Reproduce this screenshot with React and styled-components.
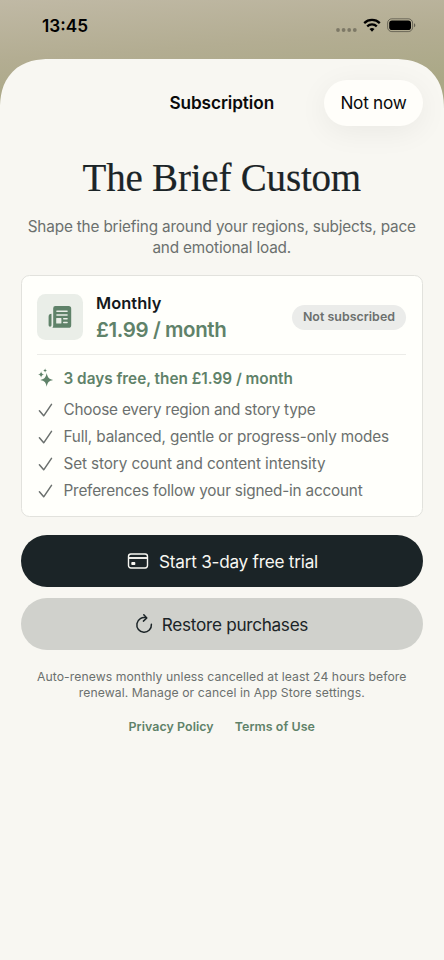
import React from "react";
import styled, { createGlobalStyle, css } from "styled-components";

// -------------------
// -- Global Styles --
// -------------------
const GlobalStyle = createGlobalStyle`
  *,
  *::before,
  *::after {
    box-sizing: border-box;
  }

  :root {
    --color-ink: #1b2427;
    --color-muted: #6b706e;
    --color-green: #5f8269;
    --color-sheet: #f8f7f2;
    --color-card: #fffffb;
  }

  body {
    margin: 0;
    font-family: Inter, "Liberation Sans", sans-serif;
    -webkit-font-smoothing: antialiased;
  }

  h1,
  h2,
  p,
  ul {
    margin: 0;
    padding: 0;
  }
`;

// --------------------------
// -- Styled Subcomponents --
// --------------------------
const Screen = styled.div`
  display: flex;
  flex-direction: column;
  width: 444px;
  height: 960px;
  overflow: hidden;
  background: linear-gradient(176deg, #c0b9a5 0, #b3ad92 60px, #aaa886 110px);
`;

const StatusBar = styled.div`
  display: flex;
  justify-content: space-between;
  flex: none;
  height: 59px;
  padding: 15px 28px 0 42px;
  color: #000;
`;

const Time = styled.span`
  font-size: 17.2px;
  font-weight: 600;
  line-height: 22px;
  letter-spacing: 0;
`;

const StatusIcons = styled.svg`
  display: block;
  width: 82px;
  height: 20px;
`;

const Sheet = styled.main`
  display: flex;
  flex-direction: column;
  flex: 1;
  padding: 0 21px 0 20.5px;
  border-radius: 50px 50px 0 0;
  corner-shape: superellipse(1.25);
  background-color: var(--color-sheet);
`;

const NavBar = styled.header`
  display: grid;
  grid-template-columns: 1fr auto 1fr;
  align-items: center;
  height: 46px;
  margin-top: 21px;
`;

const NavTitle = styled.h2`
  grid-column: 2;
  font-size: 17.2px;
  font-weight: 600;
  line-height: 20px;
  letter-spacing: -0.08px;
  color: #0a0a0a;
`;

const buttonReset = css`
  border: 0;
  padding: 0;
  font-family: inherit;
  cursor: pointer;
`;

const NotNowButton = styled.button`
  ${buttonReset}
  justify-self: end;
  width: 99px;
  height: 45.5px;
  border-radius: 23px;
  background-color: #fffefa;
  box-shadow: 0 6px 30px rgba(0, 0, 0, 0.06);
  font-size: 17.2px;
  line-height: 20px;
  letter-spacing: -0.25px;
  color: #0a0a0a;
`;

const Title = styled.h1`
  margin-top: 28px;
  font-family: "Liberation Serif", "Times New Roman", serif;
  font-size: 39px;
  font-weight: 400;
  line-height: 48px;
  letter-spacing: -0.2px;
  text-align: center;
  white-space: nowrap;
  color: var(--color-ink);
  -webkit-text-stroke: 0.2px var(--color-ink);
`;

const Intro = styled.p`
  margin-top: 15px;
  font-size: 15.3px;
  line-height: 20.6px;
  letter-spacing: -0.16px;
  text-align: center;
  white-space: nowrap;
  color: var(--color-muted);
`;

const Card = styled.section`
  height: 242px;
  margin-top: 16.5px;
  padding: 18.5px 16px 0 15.5px;
  border: 1px solid #e2e2dd;
  border-radius: 8.5px;
  background-color: var(--color-card);
`;

const PlanRow = styled.div`
  display: flex;
  align-items: center;
  height: 60px;
  padding-bottom: 14px;
`;

const PlanIcon = styled.div`
  display: grid;
  place-items: center;
  width: 46px;
  height: 46px;
  border-radius: 8.5px;
  background-color: #eaeee8;
`;

const PlanText = styled.div`
  flex: 1;
  margin-left: 13px;
  white-space: nowrap;
`;

const PlanName = styled.p`
  padding-top: 1px;
  font-size: 16.4px;
  font-weight: 600;
  line-height: 23px;
  letter-spacing: 0.05px;
  color: #14191b;
`;

const PlanPrice = styled.p`
  margin-top: 2px;
  font-size: 20.5px;
  font-weight: 600;
  line-height: 26px;
  letter-spacing: -0.4px;
  color: var(--color-green);
`;

const StatusPill = styled.span`
  height: 25px;
  padding: 0 11px;
  border-radius: 13px;
  background-color: #ebecea;
  font-size: 12.4px;
  font-weight: 600;
  line-height: 24.5px;
  letter-spacing: 0.03px;
  white-space: nowrap;
  color: var(--color-muted);
`;

const Divider = styled.div`
  height: 1px;
  background-color: #ecece8;
`;

const FeatureList = styled.ul`
  display: flex;
  flex-direction: column;
  margin-top: 9px;
  list-style: none;
`;

const Feature = styled.li`
  display: flex;
  align-items: center;
  height: 27px;
  gap: 8.5px;
  font-size: 15.3px;
  letter-spacing: ${(props) => props.$tracking};
  white-space: nowrap;
  color: var(--color-muted);

  ${(props) =>
    props.$highlight &&
    css`
      height: 28px;
      margin-bottom: 4px;
      font-weight: 600;
      color: var(--color-green);
    `}

  > svg {
    flex: none;
    width: 18px;
    height: 20px;
  }
`;

const Actions = styled.div`
  display: flex;
  flex-direction: column;
  gap: 11px;
  margin-top: 18px;
`;

const ActionButton = styled.button`
  ${buttonReset}
  display: flex;
  align-items: center;
  justify-content: center;
  gap: ${(props) => (props.$primary ? "10px" : "8.5px")};
  height: 52px;
  padding: ${(props) => (props.$primary ? "1px 0 0 1.5px" : "1px 0 0")};
  border-radius: 26px;
  background-color: ${(props) => (props.$primary ? "#1b2427" : "#d0d1cc")};
  font-size: 17.2px;
  line-height: 21px;
  letter-spacing: ${(props) => (props.$primary ? "-0.24px" : "-0.3px")};
  white-space: nowrap;
  color: ${(props) => (props.$primary ? "#f8f7f2" : "#1b2427")};
`;

const Legal = styled.p`
  margin-top: 19px;
  font-size: 12.2px;
  line-height: 16.5px;
  letter-spacing: 0.08px;
  text-align: center;
  white-space: nowrap;
  color: var(--color-muted);
`;

const LegalLinks = styled.nav`
  display: flex;
  justify-content: center;
  gap: 21px;
  margin-top: 16px;
`;

const LegalLink = styled.a`
  font-size: 12.4px;
  font-weight: 600;
  line-height: 17px;
  letter-spacing: 0.07px;
  white-space: nowrap;
  text-decoration: none;
  color: var(--color-green);
`;

// -----------
// -- Icons --
// -----------
const StatusGlyphs = () => (
  <StatusIcons viewBox="0 0 82 20" aria-hidden="true">
    <g fill="#000" opacity="0.3">
      <circle cx="4" cy="15" r="1.9" />
      <circle cx="9.6" cy="15" r="1.9" />
      <circle cx="15.2" cy="15" r="1.9" />
      <circle cx="20.8" cy="15" r="1.9" />
    </g>
    <g fill="none" stroke="#000" strokeWidth="2.3">
      <path d="M30.2 8.1a11.2 11.2 0 0 1 15.6 0" />
      <path d="M33.2 11.3a6.9 6.9 0 0 1 9.6 0" />
    </g>
    <path d="M38 16.7l-2.5-2.6a3.6 3.6 0 0 1 5 0z" fill="#000" />
    <rect
      x="53.6"
      y="3.8"
      width="25"
      height="12.8"
      rx="4.2"
      fill="none"
      stroke="#000"
      strokeOpacity="0.4"
    />
    <rect x="55.2" y="5.4" width="21.8" height="9.6" rx="2.8" fill="#000" />
    <path d="M80 8.2c1.8.7 1.8 3.3 0 4z" fill="#000" opacity="0.45" />
  </StatusIcons>
);

const NewsIcon = () => (
  <svg width="24" height="24" viewBox="0 0 24 24" aria-hidden="true">
    <path
      d="M7.4 1h13.2a2.6 2.6 0 0 1 2.6 2.6v16.6a2.6 2.6 0 0 1-2.6 2.6H4.4c.6-.6.8-1.4.8-2.2V3.3A2.3 2.3 0 0 1 7.4 1z"
      fill="#5f8269"
    />
    <path
      d="M3.5 8.8v11.4a1.45 1.45 0 0 1-2.9 0v-8.5c0-1.7 1-2.8 2.9-2.9z"
      fill="#5f8269"
    />
    <g fill="#eaeee8">
      <rect x="8.2" y="5.5" width="11.6" height="1.4" rx="0.7" />
      <rect x="8.2" y="9.3" width="11.6" height="1.4" rx="0.7" />
      <rect x="8.2" y="13" width="5.2" height="5.6" rx="0.5" />
      <rect x="15" y="13" width="4.8" height="1.4" rx="0.7" />
      <rect x="15" y="16.8" width="4.8" height="1.4" rx="0.7" />
    </g>
  </svg>
);

const SparklesIcon = () => (
  <svg viewBox="0 0 18 20" fill="#5f8269" aria-hidden="true">
    <path d="M9.7 5.1c.9 4.5 1.9 5.8 6.4 6.8-4.5 1-5.500 2.300-6.400 6.800-.9-4.500-1.900-5.800-6.400-6.800 4.500-1 5.500-2.300 6.400-6.800z" />
    <path d="M4.100 3.200c.4 2.300 1 2.900 3.200 3.300-2.200.4-2.800 1-3.200 3.300-.4-2.300-1-2.900-3.200-3.300 2.200-.4 2.800-1 3.200-3.300z" />
    <path d="M8.100.3c.2 1.500.6 1.900 2.100 2.200-1.500.3-1.900.7-2.100 2.200-.2-1.500-.6-1.900-2.100-2.200 1.500-.3 1.900-.7 2.100-2.200z" />
  </svg>
);

const CheckIcon = () => (
  <svg
    viewBox="0 0 18 20"
    fill="none"
    stroke="#6b706e"
    strokeWidth="1.5"
    strokeLinecap="round"
    strokeLinejoin="round"
    aria-hidden="true"
  >
    <path d="M2.4 10.7l4.3 5.1 7.8-11.5" />
  </svg>
);

const CardIcon = () => (
  <svg width="22" height="18" viewBox="0 0 22 18" aria-hidden="true">
    <rect
      x="1.5"
      y="2"
      width="19"
      height="14"
      rx="2.4"
      fill="none"
      stroke="#f8f7f2"
      strokeWidth="1.4"
    />
    <path d="M1.5 6h19" stroke="#f8f7f2" strokeWidth="1.9" />
    <rect x="4.3" y="10.1" width="4" height="3" rx="0.8" fill="#f8f7f2" />
  </svg>
);

const RestoreIcon = () => (
  <svg
    width="18"
    height="22"
    viewBox="0 0 18 22"
    fill="none"
    stroke="#1b2427"
    strokeWidth="1.5"
    strokeLinecap="round"
    strokeLinejoin="round"
    aria-hidden="true"
  >
    <path d="M11.3 4.9A7.3 7.3 0 1 0 16.4 11.3" />
    <path d="M8.8 1.7l3 3.3-3.4 3.1" />
  </svg>
);

// --------------------
// -- Main Component --
// --------------------
const features = [
  { text: "Choose every region and story type", tracking: "-0.21px" },
  { text: "Full, balanced, gentle or progress-only modes", tracking: "-0.15px" },
  { text: "Set story count and content intensity", tracking: "-0.11px" },
  { text: "Preferences follow your signed-in account", tracking: "-0.19px" },
];

function App() {
  return (
    <>
      <GlobalStyle />
      <Screen>
        <StatusBar>
          <Time>13:45</Time>
          <StatusGlyphs />
        </StatusBar>
        <Sheet>
          <NavBar>
            <NavTitle>Subscription</NavTitle>
            <NotNowButton>Not now</NotNowButton>
          </NavBar>
          <Title>The Brief Custom</Title>
          <Intro>
            Shape the briefing around your regions, subjects, pace
            <br />
            and emotional load.
          </Intro>
          {/* Plan */}
          <Card>
            <PlanRow>
              <PlanIcon>
                <NewsIcon />
              </PlanIcon>
              <PlanText>
                <PlanName>Monthly</PlanName>
                <PlanPrice>£1.99 / month</PlanPrice>
              </PlanText>
              <StatusPill>Not subscribed</StatusPill>
            </PlanRow>
            <Divider />
            <FeatureList>
              <Feature $highlight $tracking="0">
                <SparklesIcon />
                3 days free, then £1.99 / month
              </Feature>
              {features.map(({ text, tracking }) => (
                <Feature key={text} $tracking={tracking}>
                  <CheckIcon />
                  {text}
                </Feature>
              ))}
            </FeatureList>
          </Card>
          {/* Purchase actions */}
          <Actions>
            <ActionButton $primary>
              <CardIcon />
              Start 3-day free trial
            </ActionButton>
            <ActionButton>
              <RestoreIcon />
              Restore purchases
            </ActionButton>
          </Actions>
          <Legal>
            Auto-renews monthly unless cancelled at least 24 hours before
            <br />
            renewal. Manage or cancel in App Store settings.
          </Legal>
          <LegalLinks>
            <LegalLink href="#privacy">Privacy Policy</LegalLink>
            <LegalLink href="#terms">Terms of Use</LegalLink>
          </LegalLinks>
        </Sheet>
      </Screen>
    </>
  );
}

export default App;
